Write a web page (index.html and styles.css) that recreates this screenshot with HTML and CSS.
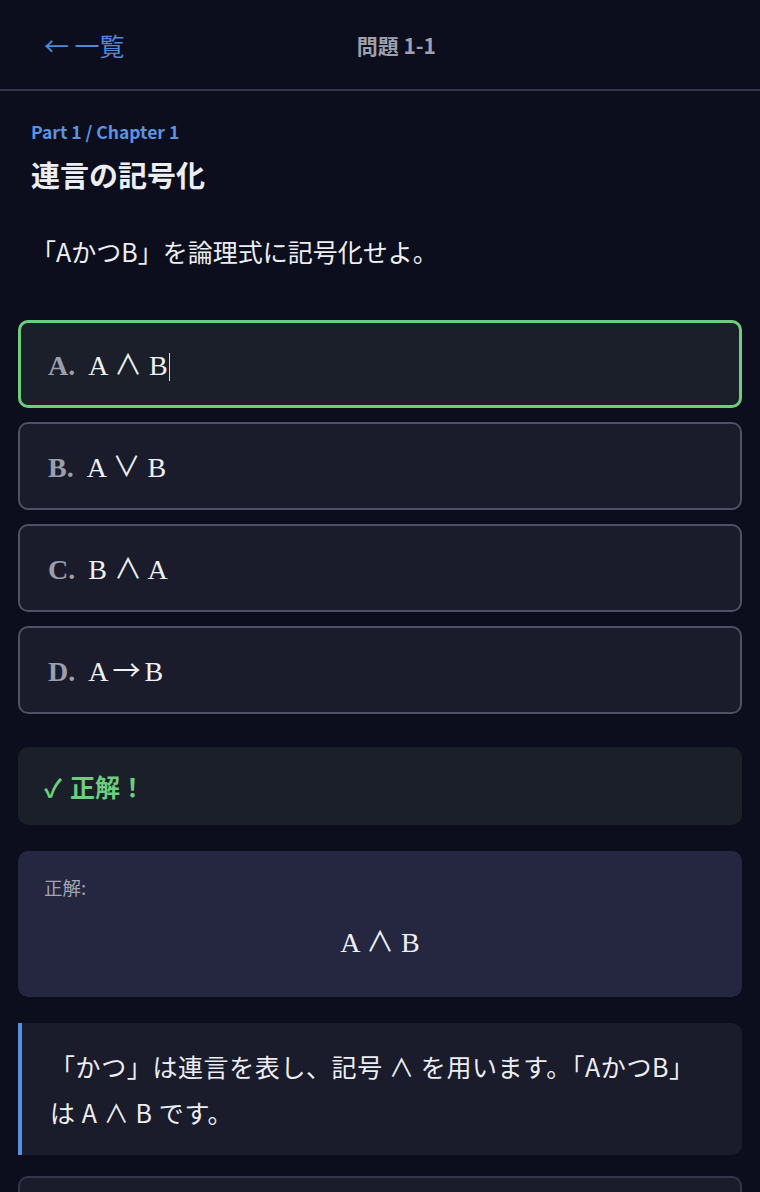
FILE: index.html
```html
<!DOCTYPE html>
<html lang="ja">
<head>
<meta charset="utf-8">
<title>問題 1-1</title>
<link rel="stylesheet" href="styles.css">
</head>
<body>
<header class="topbar">
  <a class="back">← 一覧</a>
  <div class="page-title">問題 1-1</div>
  <div class="spacer"></div>
</header>
<main class="content">
  <section class="intro">
    <div class="meta">Part 1 / Chapter 1</div>
    <h1 class="title">連言の記号化</h1>
    <p class="question">「AかつB」を論理式に記号化せよ。</p>
  </section>
  <div class="options">
    <div class="option correct"><div class="option-text"><span class="label">A.</span><span class="formula">A <span class="op">∧</span> B</span><span class="caret"></span></div></div>
    <div class="option"><div class="option-text"><span class="label">B.</span><span class="formula">A <span class="op">∨</span> B</span></div></div>
    <div class="option"><div class="option-text"><span class="label">C.</span><span class="formula">B <span class="op">∧</span> A</span></div></div>
    <div class="option"><div class="option-text"><span class="label">D.</span><span class="formula">A<span class="op arrow">→</span>B</span></div></div>
  </div>
  <div class="feedback"><span class="check">✓</span>正解！</div>
  <div class="answer">
    <div class="answer-label">正解:</div>
    <div class="answer-formula">A <span class="op">∧</span> B</div>
  </div>
  <div class="explain">「かつ」は連言を表し、記号 ∧ を用います。「AかつB」は A ∧ B です。</div>
  <div class="next-card"></div>
</main>
</body>
</html>
```
FILE: styles.css
```css
html, body {
  margin: 0;
  padding: 0;
  background: #0c0e1d;
  color: #e6e7ee;
  font-family: "Noto Sans CJK JP", "Noto Sans", sans-serif;
}
.topbar {
  height: 89px;
  border-bottom: 2px solid #33364a;
  display: flex;
  align-items: center;
  padding: 0 44px;
}
.back {
  color: #5188d8;
  font-size: 25px;
  white-space: nowrap;
}
.page-title {
  flex: 1;
  text-align: center;
  color: #9fa1ad;
  font-size: 21px;
  font-weight: 700;
}
.spacer {
  width: 48px;
}
.content {
  padding: 28px 18px 0;
}
.intro {
  padding: 0 13px;
}
.meta {
  color: #5c93e2;
  font-size: 17.5px;
  font-weight: 700;
  line-height: 26px;
}
.title {
  margin: 9px 0 0;
  font-size: 29px;
  line-height: 40px;
  font-weight: 700;
  color: #eceef4;
}
.question {
  margin: 40px 0 0;
  font-size: 25px;
  line-height: 34px;
  color: #eceef4;
}
.options {
  margin-top: 52px;
  display: flex;
  flex-direction: column;
  gap: 14px;
}
.option {
  box-sizing: border-box;
  height: 88px;
  border: 2px solid #4e5064;
  border-radius: 10px;
  background: #1a1c2b;
  display: flex;
  align-items: center;
  padding: 3px 0 0 28px;
  font-family: "Liberation Serif", "DejaVu Serif", serif;
  font-size: 28px;
}
.option.correct {
  border: 3px solid #6dce7d;
  background: #1a1f29;
  padding-left: 27px;
}
.option-text {
  line-height: 36px;
  white-space: nowrap;
}
.label {
  color: #9b9eab;
  font-weight: 700;
  margin-right: 13px;
}
.formula {
  color: #eef0f6;
}
.op {
  font-family: "Noto Sans CJK JP", sans-serif;
  font-weight: 400;
  line-height: 1;
}
.arrow {
  margin: 0 4px;
}
.caret {
  display: inline-block;
  width: 0;
  height: 28px;
  border-left: 1.5px solid #d8dae2;
  margin-left: 1px;
  vertical-align: -6px;
}
.feedback {
  margin-top: 33px;
  height: 78px;
  box-sizing: border-box;
  border-radius: 10px;
  background: #1a1f29;
  display: flex;
  align-items: center;
  padding-left: 26px;
  color: #6dce7d;
  font-size: 25px;
  font-weight: 700;
}
.check {
  margin-right: 8px;
}
.answer {
  margin-top: 26px;
  height: 146px;
  box-sizing: border-box;
  border-radius: 10px;
  background: #252640;
  padding: 22px 26px 0;
}
.answer-label {
  color: #a3a4b4;
  font-size: 18.5px;
  line-height: 28px;
}
.answer-formula {
  margin-top: 24px;
  text-align: center;
  font-family: "Liberation Serif", "DejaVu Serif", serif;
  font-size: 28px;
  line-height: 36px;
  color: #eef0f6;
}
.explain {
  margin-top: 26px;
  box-sizing: border-box;
  border-left: 4px solid #5b8fdc;
  border-radius: 0 10px 10px 0;
  background: #1a1b2b;
  padding: 20px 40px 20px 28px;
  font-size: 25px;
  line-height: 46px;
  letter-spacing: 0.6px;
  color: #eceef4;
}
.next-card {
  margin-top: 21px;
  height: 60px;
  border: 2px solid #34374b;
  border-bottom: none;
  border-radius: 10px 10px 0 0;
  background: #1a1b2b;
}
```
